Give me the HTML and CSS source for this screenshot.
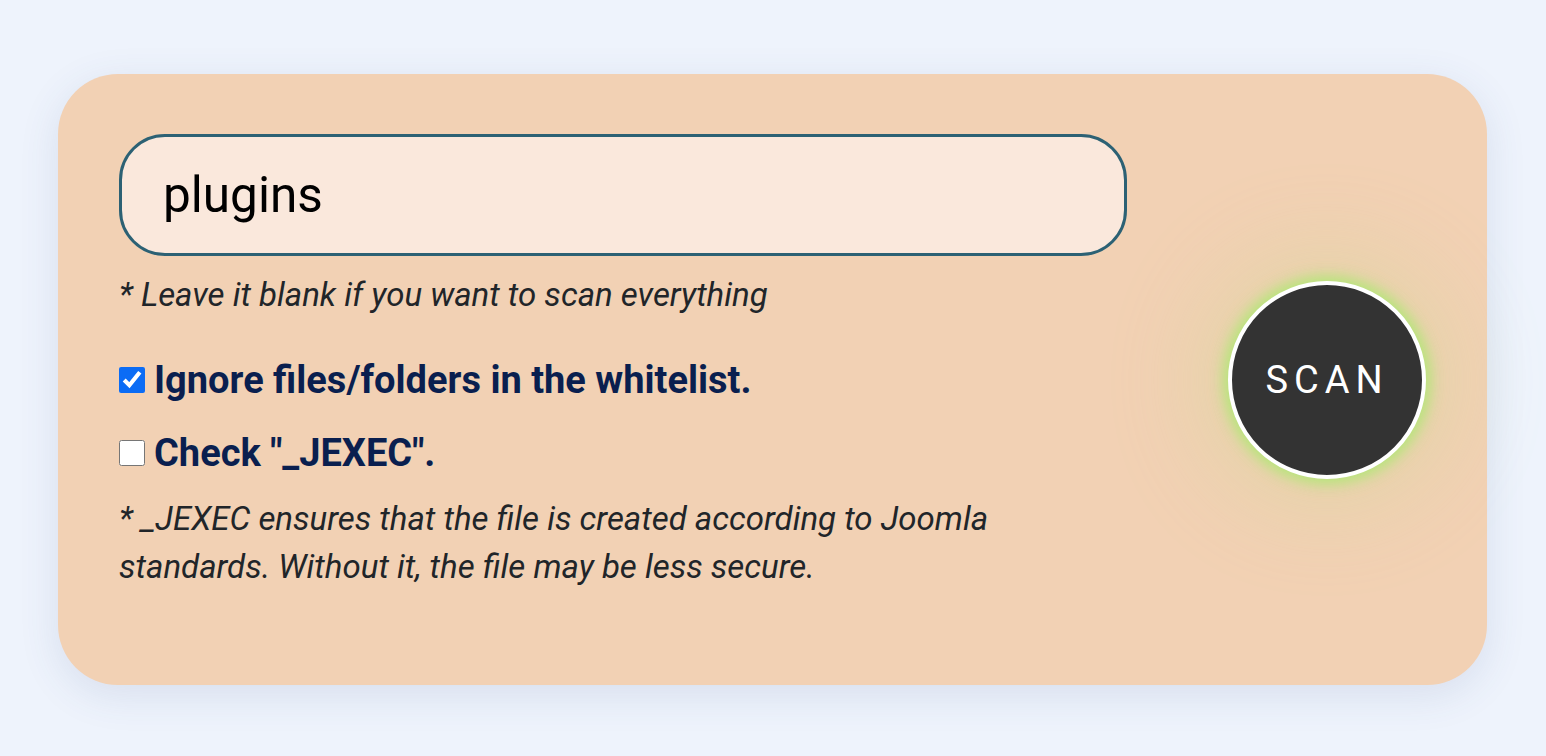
FILE: index.html
```html
<!DOCTYPE html>
<html lang="en">
<head>
<meta charset="utf-8">
<title>Scan</title>
<link rel="stylesheet" href="styles.css">
</head>
<body>
<div class="page">
  <div class="card">
    <div class="form">
      <input class="path-input" type="text" value="plugins">
      <p class="hint">* Leave it blank if you want to scan everything</p>
      <label class="option first"><input type="checkbox" checked><span>Ignore files/folders in the whitelist.</span></label>
      <label class="option second"><input type="checkbox"><span>Check "_JEXEC".</span></label>
      <p class="note">* _JEXEC ensures that the file is created according to Joomla standards. Without it, the file may be less secure.</p>
    </div>
    <button class="scan-btn" type="button">SCAN</button>
  </div>
</div>
</body>
</html>
```

FILE: styles.css
```css
html, body {
  margin: 0;
  padding: 0;
  background: #eef3fc;
  font-family: Roboto, "Liberation Sans", sans-serif;
}

.page {
  padding: 74px 59px 71px 58px;
}

.card {
  background: #f2d1b4;
  border-radius: 60px;
  box-shadow: 0 10px 40px rgba(60, 80, 130, 0.12);
  padding: 60px 61px 60px 61px;
  display: flex;
  align-items: center;
  justify-content: space-between;
}

.form {
  width: 1008px;
  display: flex;
  flex-direction: column;
  margin-bottom: 34px;
}

.path-input {
  box-sizing: border-box;
  width: 1008px;
  height: 122px;
  border: 3px solid #2c6174;
  border-radius: 46px;
  background: #fae8dc;
  font-family: Roboto, "Liberation Sans", sans-serif;
  font-size: 49.5px;
  color: #000;
  padding: 0 41px;
  outline: none;
}

.hint {
  margin: 15px 0 0 0;
  font-size: 33px;
  line-height: 48px;
  font-style: italic;
  color: #212529;
}

.option {
  display: flex;
  align-items: center;
  gap: 9px;
  font-size: 38px;
  line-height: 48px;
  font-weight: 700;
  color: #0a1f4f;
}

.option input {
  width: 26px;
  height: 26px;
  margin: 0;
  accent-color: #0b6cf5;
}

.option.first {
  margin-top: 37px;
}

.option.second {
  margin-top: 25px;
}

.note {
  margin: 18px 0 0 0;
  max-width: 920px;
  font-size: 33px;
  line-height: 48px;
  font-style: italic;
  color: #212529;
}

.scan-btn {
  box-sizing: border-box;
  width: 198px;
  height: 198px;
  flex: none;
  border-radius: 50%;
  border: 4px solid #ffffff;
  background: #333333;
  color: #ffffff;
  font-family: Roboto, "Liberation Sans", sans-serif;
  font-size: 38px;
  letter-spacing: 6px;
  padding: 0 0 0 0;
  cursor: pointer;
  box-shadow: 0 0 14px 5px rgba(175, 232, 115, 0.9), 0 0 90px 28px rgba(195, 220, 140, 0.3);
}
```
